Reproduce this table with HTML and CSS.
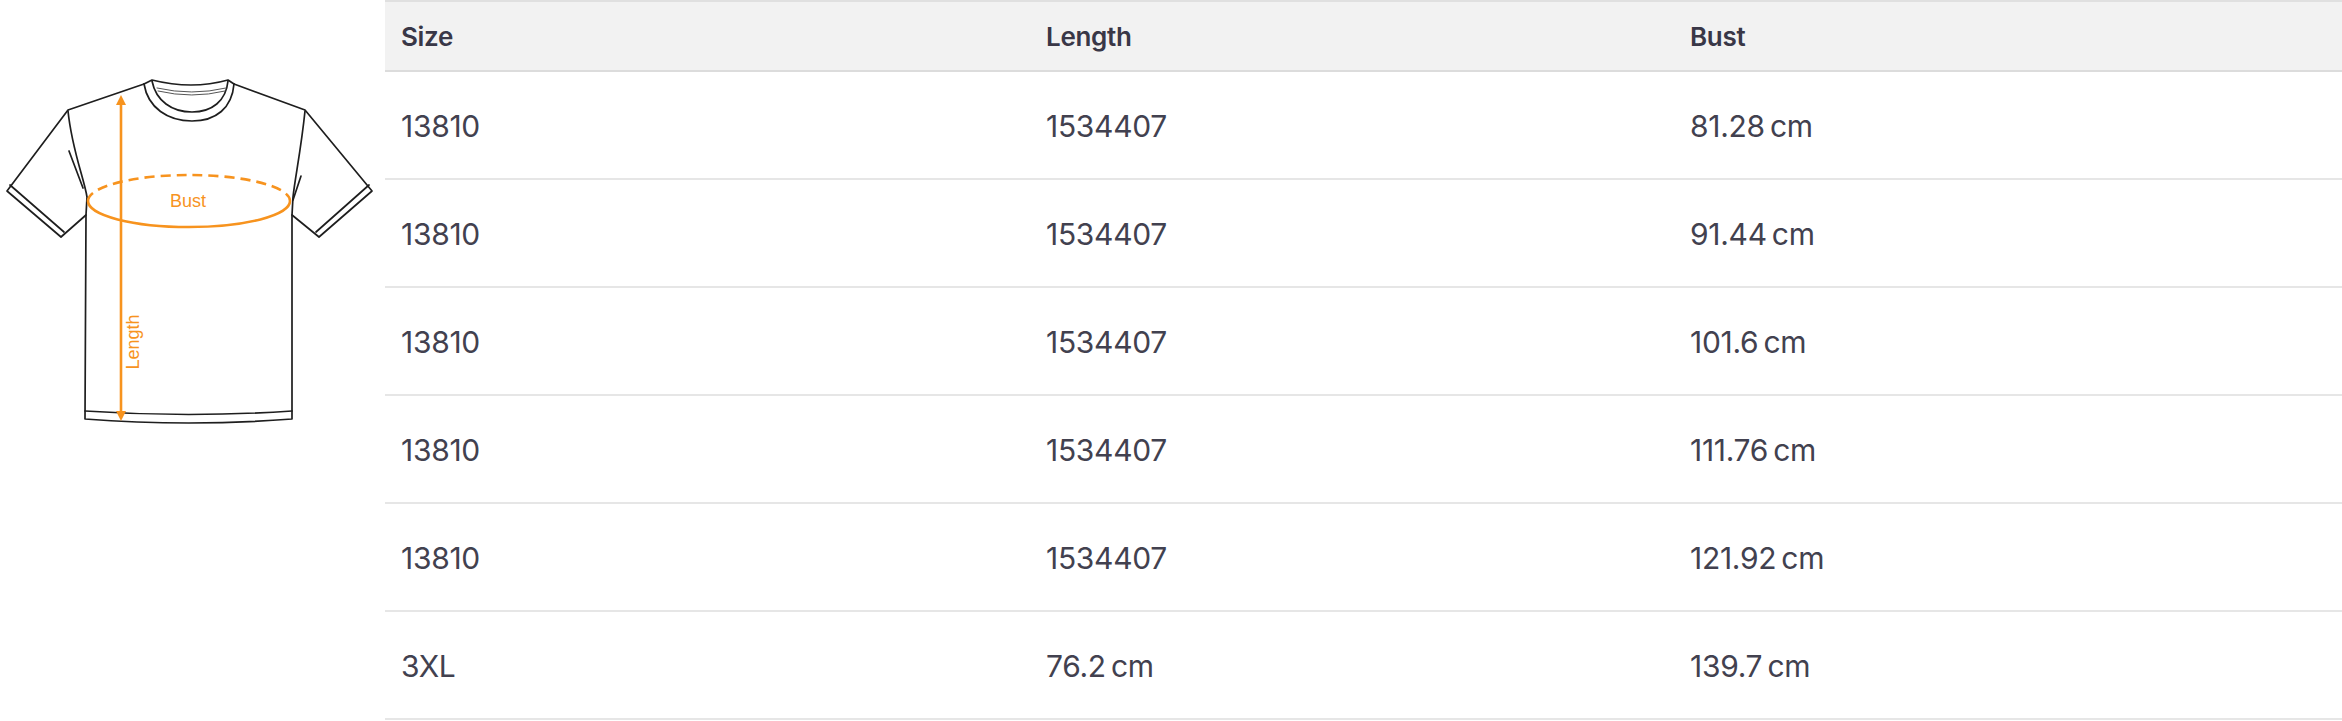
FILE: index.html
```html
<!DOCTYPE html>
<html lang="en">
<head>
<meta charset="utf-8">
<title>Size chart</title>
<link rel="stylesheet" href="styles.css">
</head>
<body>
<div class="chart">
  <div class="figure">
    <svg class="shirt" viewBox="0 0 385 440" width="385" height="440" xmlns="http://www.w3.org/2000/svg">
      <g class="outline">
        <path d="M144,84 L152,80 Q192,90 228,80 L234,84"/>
        <path d="M144,84 C148,108 168,121 192,121 C216,121 232,108 234,84"/>
        <path d="M152,81 C156,101 172,112 192,112 C212,112 226,101 228,81"/>
        <path class="thin" d="M157,88 Q192,96 226,88"/>
        <path class="thin" d="M158,91 Q192,99 225,91"/>
        <path d="M144,84 L68,110 L7,191 L61,237 L86,215"/>
        <path d="M10,185 L64,232"/>
        <path d="M68,111 C72,150 84,178 87,197 L86,215 L85,419 Q189,427 292,419 L292,215 L293,197 C295,178 301,150 305,111"/>
        <path d="M85,411 Q189,418 292,411"/>
        <path d="M69,151 L83,188"/>
        <path d="M234,84 L305,110 L372,191 L319,237 L292,215"/>
        <path d="M369,185 L316,232"/>
        <path d="M301,176 L293,200"/>
      </g>
      <g class="measure">
        <path class="dash" d="M88,201 A101,26 0 0 1 290,201"/>
        <path d="M88,201 A101,26 0 0 0 290,201"/>
        <path d="M121,101 L121,414"/>
        <path class="head" d="M121,95 L116,105 L126,105 Z"/>
        <path class="head" d="M121,421 L116,411 L126,411 Z"/>
        <text class="label" x="188" y="207" text-anchor="middle">Bust</text>
        <text class="label" x="139" y="342" text-anchor="middle" transform="rotate(-90 139 342)">Length</text>
      </g>
    </svg>
  </div>
  <table class="sizes">
    <colgroup>
      <col class="c1"><col class="c2"><col class="c3">
    </colgroup>
    <thead>
      <tr><th>Size</th><th>Length</th><th>Bust</th></tr>
    </thead>
    <tbody>
      <tr><td>13810</td><td>1534407</td><td>81.28 cm</td></tr>
      <tr><td>13810</td><td>1534407</td><td>91.44 cm</td></tr>
      <tr><td>13810</td><td>1534407</td><td>101.6 cm</td></tr>
      <tr><td>13810</td><td>1534407</td><td>111.76 cm</td></tr>
      <tr><td>13810</td><td>1534407</td><td>121.92 cm</td></tr>
      <tr><td>3XL</td><td>76.2 cm</td><td>139.7 cm</td></tr>
    </tbody>
  </table>
</div>
</body>
</html>
```

FILE: styles.css
```css
html, body {
  margin: 0;
  padding: 0;
  background: #ffffff;
}

body {
  font-family: "Inter", "Liberation Sans", sans-serif;
  color: #41404e;
}

.chart {
  display: flex;
  align-items: flex-start;
  width: 2342px;
}

.figure {
  flex: 0 0 385px;
  width: 385px;
}

.shirt {
  display: block;
}

.outline path {
  fill: none;
  stroke: #1e1e1e;
  stroke-width: 1.7;
  stroke-linejoin: round;
  stroke-linecap: round;
}

.outline path.thin {
  stroke-width: 1;
  stroke: #555555;
}

.measure path {
  fill: none;
  stroke: #f7931e;
  stroke-width: 2.6;
}

.measure path.dash {
  stroke-dasharray: 10 6;
}

.measure path.head {
  fill: #f7931e;
  stroke: none;
}

.label {
  font-family: "Liberation Sans", Arial, sans-serif;
  font-size: 18px;
  fill: #f7931e;
}

.sizes {
  flex: 1 1 auto;
  border-collapse: collapse;
  table-layout: fixed;
  width: 1957px;
}

.c1 { width: 645px; }
.c2 { width: 644px; }
.c3 { width: 668px; }

.sizes th {
  height: 68px;
  padding: 0 16px;
  text-align: left;
  font-size: 26px;
  font-weight: 600;
  color: #393747;
  background: #f2f2f2;
  border-top: 2px solid #e0e0e0;
  border-bottom: 2px solid #dcdcdc;
  letter-spacing: -0.3px;
}

.sizes td {
  height: 104px;
  padding: 2px 16px 0;
  font-size: 30px;
  font-weight: 400;
  color: #42414f;
  border-bottom: 2px solid #e6e6e6;
  letter-spacing: -0.3px;
  word-spacing: -3px;
}
```
